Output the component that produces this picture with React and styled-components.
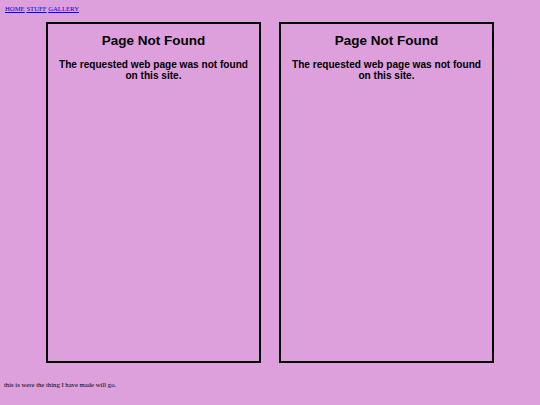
import styled, { createGlobalStyle } from "styled-components";

const GlobalStyle = createGlobalStyle`
    html, body {
        background: #dda0dd;
    }
    body {
        margin: 0;
        padding: 3px 4px;
        font-family: "Liberation Serif", "Times New Roman", serif;
        font-size: 6.7px;
    }
`;

const Nav = styled.nav`
    display: flex;
    gap: 1.7px;
    padding: 2px 0 0 1px;
    height: 17px;
`;

const NavLink = styled.a`
    color: #0000ee;
    text-decoration: underline;
`;

const Boxes = styled.main`
    display: flex;
    justify-content: center;
    gap: 18px;
`;

const Box = styled.section`
    box-sizing: border-box;
    width: 215px;
    height: 341px;
    border: 2.6px solid #000;
    font-family: "Liberation Sans", Arial, sans-serif;
    text-align: center;
    padding: 8px 4px 0;
`;

const Title = styled.h1`
    margin: 0;
    font-size: 13.5px;
    font-weight: bold;
    line-height: 18px;
`;

const Message = styled.p`
    margin: 8.5px 0 0;
    font-size: 10.1px;
    font-weight: bold;
    line-height: 11px;
`;

const Footer = styled.footer`
    margin-top: 18px;
`;

const NotFound = () => (
    <Box>
        <Title>Page Not Found</Title>
        <Message>The requested web page was not found on this site.</Message>
    </Box>
);

export default function App() {
    return (
        <>
            <GlobalStyle />
            <Nav>
                <NavLink href="#">HOME</NavLink>
                <NavLink href="#">STUFF</NavLink>
                <NavLink href="#">GALLERY</NavLink>
            </Nav>
            <Boxes>
                <NotFound />
                <NotFound />
            </Boxes>
            <Footer>this is were the thing I have made will go.</Footer>
        </>
    );
}
